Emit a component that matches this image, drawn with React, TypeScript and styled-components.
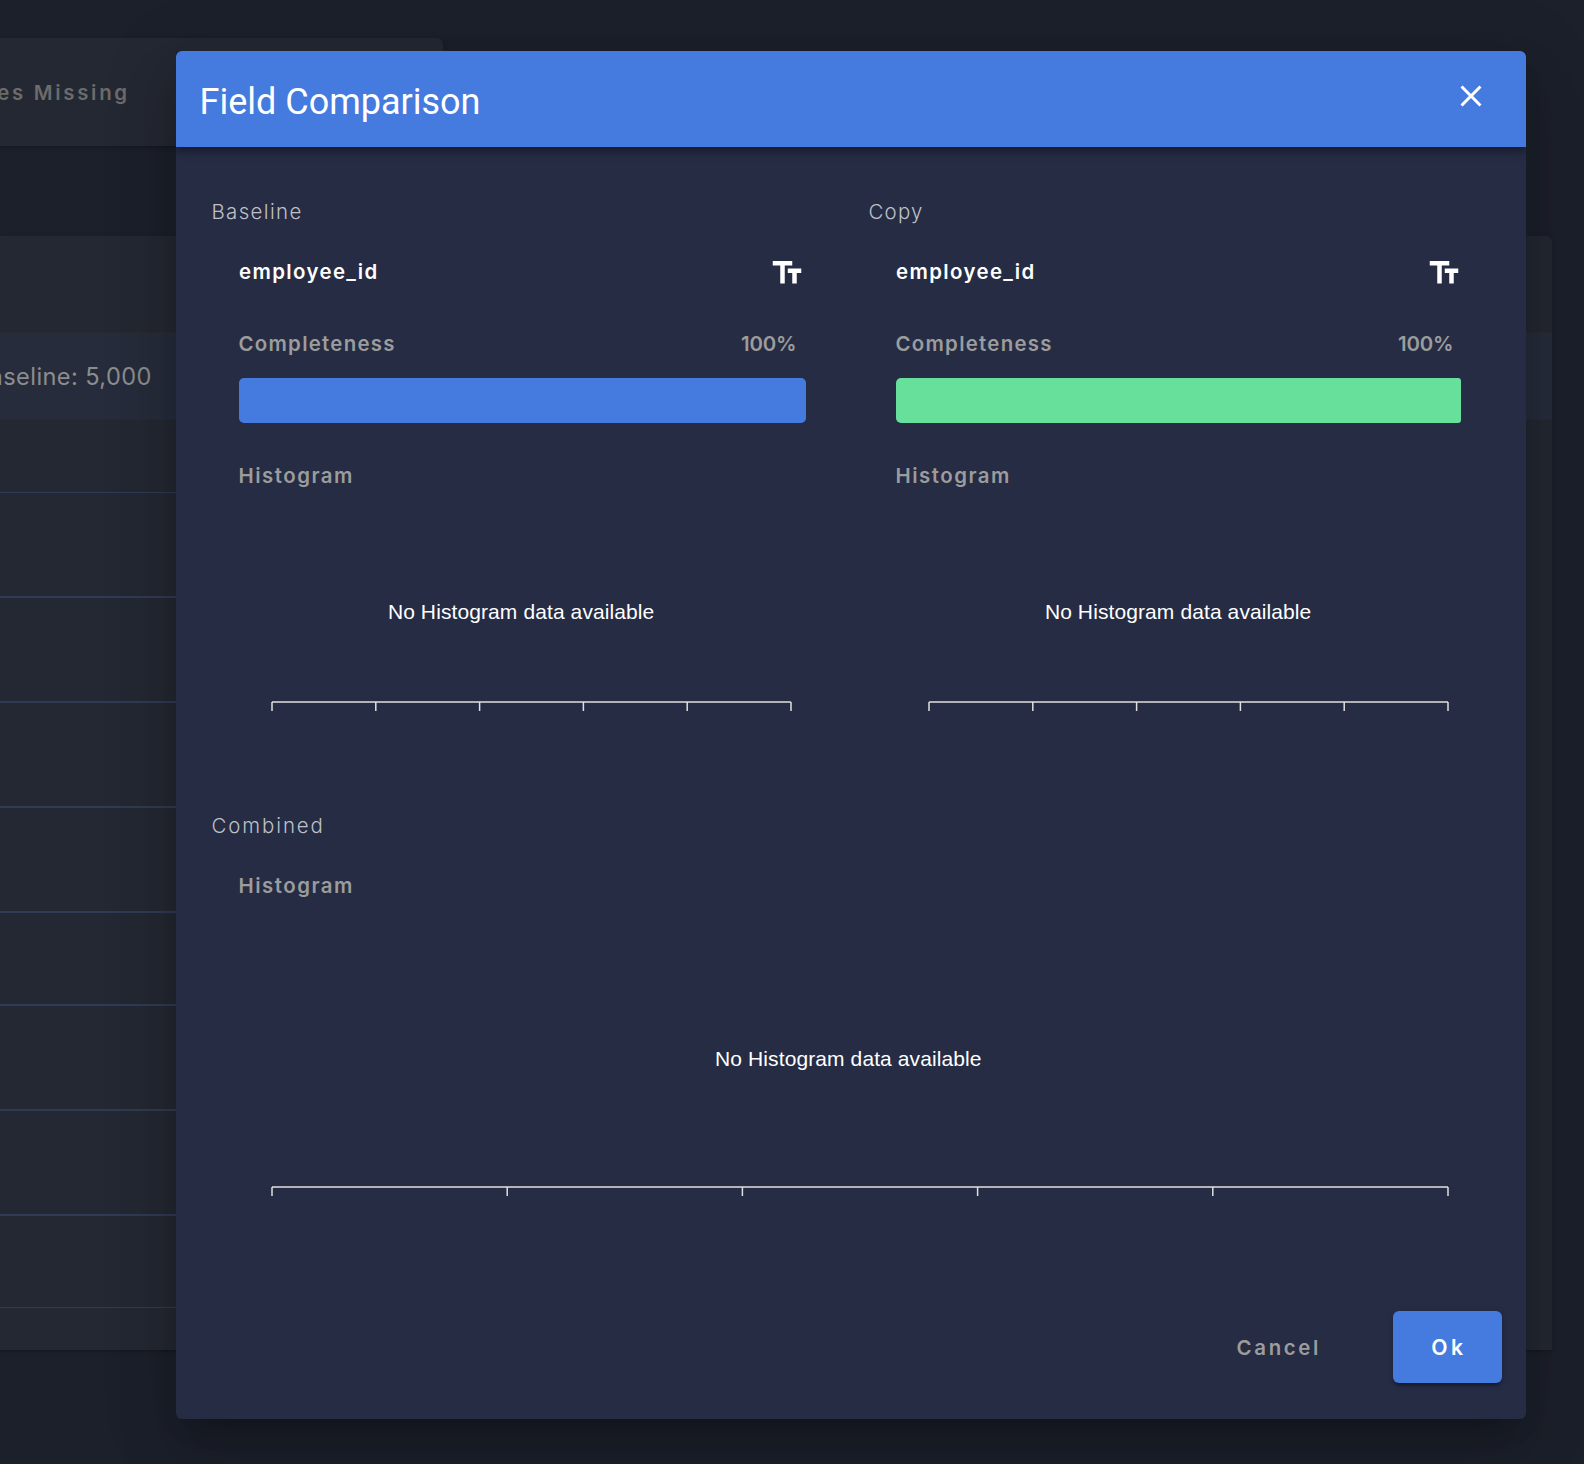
import React from 'react';
import styled, { createGlobalStyle } from 'styled-components';

const GlobalStyle = createGlobalStyle`
  *, *::before, *::after { box-sizing: border-box; }
  body {
    margin: 0;
    background: #1c202b;
    font-family: Inter, "Open Sans", sans-serif;
  }
`;

const Screen = styled.div`
  position: relative;
  width: 1584px;
  height: 1464px;
  overflow: hidden;
  background: #1c202b;
`;

/* ---------- page behind the dialog ---------- */

const Page = styled.main`
  display: flex;
  flex-direction: column;
  gap: 90px;
  padding-top: 38px;
`;

const cardShadow = `0 3px 1.5px -2px rgba(0, 0, 0, 0.1),
    0 1.5px 3px rgba(0, 0, 0, 0.08), 0 1.5px 6px rgba(0, 0, 0, 0.06)`;

const buttonShadow = `0 4.5px 1.5px -3px rgba(0, 0, 0, 0.2),
    0 3px 3px rgba(0, 0, 0, 0.14), 0 1.5px 7.5px rgba(0, 0, 0, 0.12)`;

const TabBar = styled.div`
  display: flex;
  align-items: center;
  width: 443px;
  height: 108px;
  padding-top: 2px;
  border-radius: 0 6px 6px 0;
  background: #242832;
  box-shadow: ${cardShadow};
`;

const Tab = styled.span`
  display: flex;
  justify-content: flex-end;
  width: 129.8px;
  color: #6b6b6b;
  font-size: 20.4px;
  font-weight: 600;
  line-height: 30px;
  letter-spacing: 2.7px;
  white-space: nowrap;
`;

const Table = styled.section`
  width: 1552px;
  height: 1114px;
  border-radius: 0 6px 0 0;
  background: #242832;
  box-shadow: ${cardShadow};
`;

const TableHeader = styled.div`
  height: 97px;
  border-bottom: 1px solid #2b2a2b;
`;

const SummaryBand = styled.div`
  display: flex;
  align-items: center;
  height: 87px;
  padding-top: 2px;
  border-bottom: 1px solid #2a2a2d;
  background: #262c3b;
`;

const Summary = styled.span`
  display: flex;
  justify-content: flex-end;
  width: 151.8px;
  color: #8c8d8e;
  font-size: 23.6px;
  line-height: 34px;
  letter-spacing: 0.4px;
  white-space: nowrap;
`;

const TableRow = styled.div<{ $height: number; $line: number }>`
  width: 1500px;
  height: ${(p) => p.$height}px;
  border-bottom: ${(p) => p.$line}px solid #313a56;
`;

/* ---------- dialog ---------- */

const Overlay = styled.div`
  position: absolute;
  inset: 0;
  padding: 51px 0 0 176px;
`;

const Dialog = styled.div`
  display: flex;
  flex-direction: column;
  width: 1350px;
  height: 1368px;
  border-radius: 6px;
  background: #252c44;
  box-shadow: 0 16.5px 22.5px -10.5px rgba(0, 0, 0, 0.2),
    0 36px 57px 4.5px rgba(0, 0, 0, 0.12), 0 13.5px 69px 12px rgba(0, 0, 0, 0.1);
`;

const DialogHeader = styled.header`
  display: flex;
  justify-content: space-between;
  height: 96px;
  padding: 0 37px 0 23.5px;
  border-radius: 6px 6px 0 0;
  background: #457adf;
  box-shadow: 0 3px 6px -1.5px rgba(0, 0, 0, 0.2),
    0 6px 7.5px rgba(0, 0, 0, 0.14), 0 1.5px 15px rgba(0, 0, 0, 0.12);
  clip-path: inset(0 0 -24px 0);
`;

const Title = styled.h2`
  margin: 27px 0 0;
  color: #fff;
  font: 400 36px/48px Roboto, sans-serif;
`;

const CloseButton = styled.button`
  display: flex;
  width: 36px;
  height: 36px;
  margin-top: 27px;
  padding: 0;
  border: 0;
  background: none;
  color: #fff;
`;

const DialogBody = styled.div`
  display: flex;
  flex: 1;
  flex-direction: column;
  padding: 49px 0 0 35.4px;
`;

const Columns = styled.div`
  display: grid;
  grid-template-columns: 657px 630px;
  height: 614px;
`;

const Section = styled.section`
  display: flex;
  flex-direction: column;
`;

const SectionLabel = styled.div<{ $tracking: number }>`
  height: 30px;
  color: #bfc1c7;
  font-size: 20.4px;
  font-weight: 300;
  line-height: 31px;
  letter-spacing: ${(p) => p.$tracking}px;
`;

const SectionContent = styled.div<{ $width: number; $top: number }>`
  display: flex;
  flex-direction: column;
  width: ${(p) => p.$width}px;
  margin: ${(p) => p.$top}px 0 0 27.6px;
`;

const NameRow = styled.div`
  display: flex;
  align-items: center;
  justify-content: space-between;
  height: 36px;
  padding-right: 1px;
  color: #fff;
`;

const FieldName = styled.span`
  height: 32px;
  font-size: 20.4px;
  font-weight: 600;
  line-height: 30px;
  letter-spacing: 1.39px;
`;

const MetricRow = styled.div`
  display: flex;
  justify-content: space-between;
  height: 30px;
  margin-top: 38px;
  padding-right: 9.6px;
`;

const Metric = styled.span<{ $tracking: number }>`
  margin-left: -0.5px;
  color: #9c9c9c;
  font-size: 20.4px;
  font-weight: 600;
  line-height: 30px;
  letter-spacing: ${(p) => p.$tracking}px;
`;

const Bar = styled.div<{ $color: string; $inset?: number; $endRadius: number }>`
  height: 45px;
  margin: 19.5px ${(p) => p.$inset ?? 0}px 37.5px 0;
  border-radius: 5px ${(p) => p.$endRadius}px ${(p) => p.$endRadius}px 5px;
  background: ${(p) => p.$color};
`;

const Chart = styled.svg`
  display: block;
  overflow: visible;
`;

const EmptyText = styled.text`
  fill: #fff;
  font: 400 21px "Liberation Sans", Arial, sans-serif;
  letter-spacing: 0.1px;
`;

const Footer = styled.footer`
  display: flex;
  justify-content: flex-end;
  gap: 36px;
  height: 108px;
  padding-right: 24px;
`;

const Button = styled.button<{ $primary?: boolean }>`
  height: 72px;
  padding: ${(p) => (p.$primary ? '0 0 0 3px' : '1px 36px 0')};
  width: ${(p) => (p.$primary ? '109px' : 'auto')};
  border: 0;
  border-radius: 6px;
  background: ${(p) => (p.$primary ? '#457adf' : 'transparent')};
  box-shadow: ${(p) => (p.$primary ? buttonShadow : 'none')};
  color: ${(p) => (p.$primary ? '#fff' : '#9c9c9c')};
  font-family: inherit;
  font-size: ${(p) => (p.$primary ? 21.2 : 20.4)}px;
  font-weight: 600;
  line-height: 72px;
  letter-spacing: ${(p) => (p.$primary ? 3.6 : 2.65)}px;
`;

const CloseIcon = () => (
  <svg width="36" height="36" viewBox="0 0 24 24" fill="currentColor">
    <path d="M19 6.41 17.59 5 12 10.59 6.41 5 5 6.41 10.59 12 5 17.59 6.41 19 12 13.41 17.59 19 19 17.59 13.41 12z" />
  </svg>
);

const TextFieldsIcon = () => (
  <svg width="36" height="36" viewBox="0 0 24 24" fill="currentColor">
    <path d="M2.5 4v3h5v12h3V7h5V4h-13zm19 5h-9v3h3v7h3v-7h3V9z" />
  </svg>
);

interface HistogramProps {
  width: number;
  height: number;
  axisY: number;
  axisWidth: number;
  textX: number;
  textY: number;
}

const AXIS_LEFT = 33;

function Histogram({ width, height, axisY, axisWidth, textX, textY }: HistogramProps) {
  const ticks = [0, 1, 2, 3, 4, 5].map((i) => AXIS_LEFT + (i * axisWidth) / 5);
  return (
    <Chart width={width} height={height}>
      <EmptyText x={textX} y={textY}>No Histogram data available</EmptyText>
      <g stroke="#e0e0e0" strokeWidth="1.5">
        <line x1={AXIS_LEFT} x2={AXIS_LEFT + axisWidth} y1={axisY} y2={axisY} />
        {ticks.map((x) => (
          <line key={x} x1={x} x2={x} y1={axisY} y2={axisY + 9} />
        ))}
      </g>
    </Chart>
  );
}

interface FieldPanelProps {
  label: string;
  tracking: number;
  color: string;
  barInset?: number;
  barEndRadius: number;
}

function FieldPanel({ label, tracking, color, barInset, barEndRadius }: FieldPanelProps) {
  return (
    <Section>
      <SectionLabel $tracking={tracking}>{label}</SectionLabel>
      <SectionContent $width={567} $top={28.5}>
        <NameRow>
          <FieldName>employee_id</FieldName>
          <TextFieldsIcon />
        </NameRow>
        <MetricRow>
          <Metric $tracking={1.28}>Completeness</Metric>
          <Metric $tracking={-0.15}>100%</Metric>
        </MetricRow>
        <Bar $color={color} $inset={barInset} $endRadius={barEndRadius} />
        <Metric $tracking={1.5}>Histogram</Metric>
        <Histogram width={567} height={290} axisY={211} axisWidth={519} textX={148.9} textY={128} />
      </SectionContent>
    </Section>
  );
}

const rows: [number, number][] = [
  [73, 1], [105, 2], [105, 2], [105, 2], [105, 2], [93, 2], [105, 2], [105, 2], [92, 1],
];

export default function App() {
  return (
    <Screen>
      <GlobalStyle />
      <Page>
        <TabBar>
          <Tab>Values Missing</Tab>
        </TabBar>
        <Table>
          <TableHeader />
          <SummaryBand>
            <Summary>Baseline: 5,000</Summary>
          </SummaryBand>
          {rows.map(([height, line], i) => (
            <TableRow key={i} $height={height} $line={line} />
          ))}
        </Table>
      </Page>
      <Overlay>
        <Dialog role="dialog" aria-labelledby="dialog-title">
          <DialogHeader>
            <Title id="dialog-title">Field Comparison</Title>
            <CloseButton aria-label="Close">
              <CloseIcon />
            </CloseButton>
          </DialogHeader>
          <DialogBody>
            <Columns>
              <FieldPanel label="Baseline" tracking={1.4} color="#457adf" barEndRadius={5} />
              <FieldPanel label="Copy" tracking={1.3} color="#67e09c" barInset={1.7} barEndRadius={3} />
            </Columns>
            <Section>
              <SectionLabel $tracking={1.95}>Combined</SectionLabel>
              <SectionContent $width={1224} $top={30.5}>
                <Metric $tracking={1.5}>Histogram</Metric>
                <Histogram width={1224} height={290} axisY={286} axisWidth={1176} textX={476.1} textY={165} />
              </SectionContent>
            </Section>
          </DialogBody>
          <Footer>
            <Button>Cancel</Button>
            <Button $primary>Ok</Button>
          </Footer>
        </Dialog>
      </Overlay>
    </Screen>
  );
}
